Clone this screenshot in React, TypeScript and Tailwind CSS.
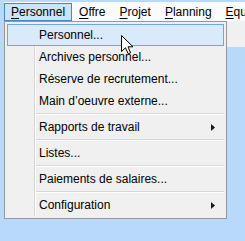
import React from 'react';

type Entry = { label?: string; sub?: boolean; active?: boolean; sep?: boolean };

const entries: Entry[] = [
  { label: 'Personnel...', active: true },
  { label: 'Archives personnel...' },
  { label: 'Réserve de recrutement...' },
  { label: 'Main d\u2019oeuvre externe...' },
  { sep: true },
  { label: 'Rapports de travail', sub: true },
  { sep: true },
  { label: 'Listes...' },
  { sep: true },
  { label: 'Paiements de salaires...' },
  { sep: true },
  { label: 'Configuration', sub: true },
];

const barItems = [
  { first: 'P', rest: 'ersonnel', open: true },
  { first: 'O', rest: 'ffre' },
  { first: 'P', rest: 'rojet' },
  { first: 'P', rest: 'lanning' },
  { first: 'E', rest: 'quipe' },
];

const Cursor = () => (
  <svg width="13" height="20" viewBox="0 0 13 20" className="absolute left-[121px] top-[35px]">
    <path
      d="M0.5 0.5 L0.5 16.5 L4.5 12.8 L7.2 18.8 L9.6 17.8 L7 11.8 L12 11.8 Z"
      fill="#ffffff"
      stroke="#000000"
      strokeWidth="1"
      strokeLinejoin="miter"
    />
  </svg>
);

const SubArrow = () => (
  <svg width="4" height="7" viewBox="0 0 4 7" className="ml-auto">
    <path d="M0 0 L4 3.5 L0 7 Z" fill="#1a1a1a" />
  </svg>
);

const App = () => {
  return (
    <div
      className="relative w-[245px] h-[241px] overflow-hidden bg-[#b9d9fb] text-[12px] text-black"
      style={{ fontFamily: '"Segoe UI", "Liberation Sans", Arial, sans-serif' }}
    >
      <div className="pt-[2px] pl-[4px]">
        <div className="flex h-[19px] bg-[#f9fbfd] whitespace-nowrap">
          {barItems.map((b, i) => (
            <div
              key={i}
              className={
                'mt-[1px] h-[18px] flex items-center px-[6px] border leading-none ' +
                (b.open ? 'bg-[#cce4f7] border-[#4a86bf]' : 'border-transparent')
              }
            >
              <span>
                <span className="underline underline-offset-2">{b.first}</span>
                {b.rest}
              </span>
            </div>
          ))}
        </div>
        <div className="h-[26px] bg-[#f0f0f0]" />
      </div>

      <div className="absolute left-[4px] top-[21px] w-[223px] border border-[#979797] bg-[#f0f0f0] p-[2px]">
        <div className="absolute left-[29px] top-[2px] bottom-[2px] w-[1px] bg-[#d7d7d7]" />
        <div className="absolute left-[30px] top-[2px] bottom-[2px] w-[1px] bg-[#ffffff]" />
        {entries.map((e, i) =>
          e.sep ? (
            <div key={i} className="h-[4px] pl-[28px] pt-[1px]">
              <div className="h-[1px] bg-[#d7d7d7]" />
              <div className="h-[1px] bg-[#ffffff]" />
            </div>
          ) : (
            <div
              key={i}
              className={
                'relative flex items-center h-[22px] pl-[31px] pr-[8px] border whitespace-nowrap ' +
                (e.active ? 'bg-[#d9eafb] border-[#66a9ee]' : 'border-transparent')
              }
            >
              <span>{e.label}</span>
              {e.sub && <SubArrow />}
            </div>
          )
        )}
      </div>

      <Cursor />
    </div>
  );
};

export default App;
